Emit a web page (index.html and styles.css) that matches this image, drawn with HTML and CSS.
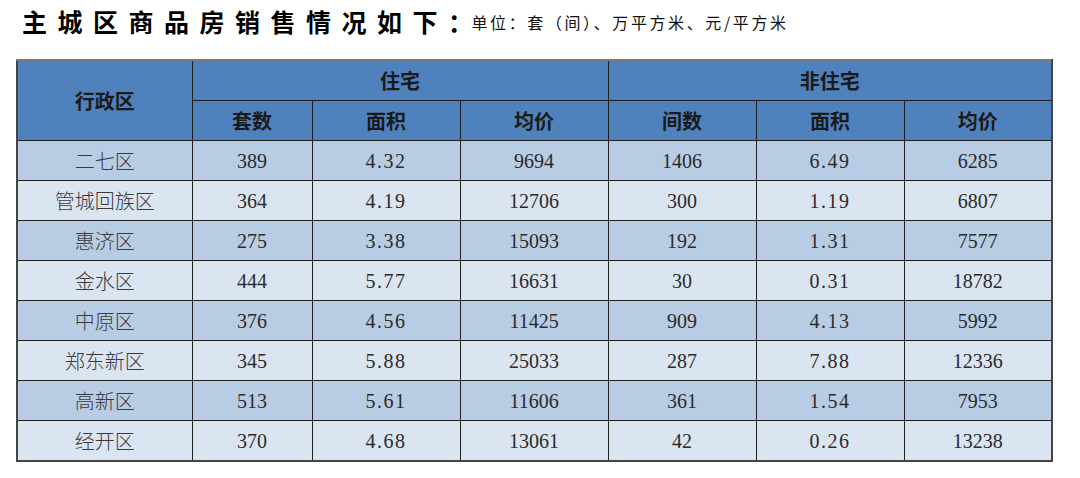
FILE: index.html
```html
<!DOCTYPE html>
<html lang="zh">
<head>
<meta charset="utf-8">
<link rel="stylesheet" href="styles.css">
</head>
<body>
<div class="page">
  <div class="heading">
    <span class="title">主城区商品房销售情况如下：</span>
    <span class="unit">单位：套（间）、万平方米、元/平方米</span>
  </div>
  <table class="sales">
    <colgroup>
      <col class="c-name"><col class="c-a"><col class="c-b"><col class="c-b"><col class="c-b"><col class="c-b"><col class="c-b">
    </colgroup>
    <thead>
      <tr>
        <th rowspan="2">行政区</th>
        <th colspan="3">住宅</th>
        <th colspan="3">非住宅</th>
      </tr>
      <tr>
        <th>套数</th><th>面积</th><th>均价</th>
        <th>间数</th><th>面积</th><th>均价</th>
      </tr>
    </thead>
    <tbody>
      <tr><td class="name">二七区</td><td>389</td><td class="dec">4.32</td><td>9694</td><td>1406</td><td class="dec">6.49</td><td>6285</td></tr>
      <tr><td class="name">管城回族区</td><td>364</td><td class="dec">4.19</td><td>12706</td><td>300</td><td class="dec">1.19</td><td>6807</td></tr>
      <tr><td class="name">惠济区</td><td>275</td><td class="dec">3.38</td><td>15093</td><td>192</td><td class="dec">1.31</td><td>7577</td></tr>
      <tr><td class="name">金水区</td><td>444</td><td class="dec">5.77</td><td>16631</td><td>30</td><td class="dec">0.31</td><td>18782</td></tr>
      <tr><td class="name">中原区</td><td>376</td><td class="dec">4.56</td><td>11425</td><td>909</td><td class="dec">4.13</td><td>5992</td></tr>
      <tr><td class="name">郑东新区</td><td>345</td><td class="dec">5.88</td><td>25033</td><td>287</td><td class="dec">7.88</td><td>12336</td></tr>
      <tr><td class="name">高新区</td><td>513</td><td class="dec">5.61</td><td>11606</td><td>361</td><td class="dec">1.54</td><td>7953</td></tr>
      <tr><td class="name">经开区</td><td>370</td><td class="dec">4.68</td><td>13061</td><td>42</td><td class="dec">0.26</td><td>13238</td></tr>
    </tbody>
  </table>
</div>
</body>
</html>
```
FILE: styles.css
```css
html, body {
  margin: 0;
  padding: 0;
  background: #ffffff;
}
.page {
  padding: 0 0 0 16px;
  font-family: "Noto Sans CJK SC", sans-serif;
}
.heading {
  height: 59px;
  display: flex;
  align-items: flex-start;
  padding: 4px 0 0 6px;
  box-sizing: border-box;
}
.title {
  font-family: "Noto Sans CJK SC", sans-serif;
  font-weight: 700;
  font-size: 25px;
  letter-spacing: 10.5px;
  line-height: 34px;
  color: #000000;
}
.unit {
  font-size: 16px;
  letter-spacing: 2.6px;
  line-height: 34px;
  color: #111111;
  padding-top: 1px;
  margin-left: -12px;
}
.sales {
  border-collapse: collapse;
  width: 1036px;
  table-layout: fixed;
  border: 2px solid #444444;
  border-top-color: #7a7a7a;
}
.c-name { width: 175px; }
.c-a { width: 120px; }
.c-b { width: 148px; }
.sales th,
.sales td {
  border: 1px solid #1e1e1e;
  height: 39px;
  padding: 0;
  text-align: center;
  vertical-align: middle;
}
.sales th {
  background: #4f81bd;
  color: #1a1a1a;
  font-family: "Noto Sans CJK SC", serif;
  font-weight: 700;
  font-size: 20px;
  line-height: 24px;
}
.sales td {
  font-family: "Liberation Serif", "Noto Sans CJK SC", serif;
  font-size: 20px;
  color: #2b2b2b;
  line-height: 24px;
}
.sales td.name {
  font-family: "Noto Sans CJK SC", serif;
  font-weight: 300;
  color: #3a3a3a;
}
.sales td.dec {
  letter-spacing: 1.5px;
}
.sales tbody tr:nth-child(odd) td { background: #b8cce4; }
.sales tbody tr:nth-child(even) td { background: #dbe5f1; }
```
